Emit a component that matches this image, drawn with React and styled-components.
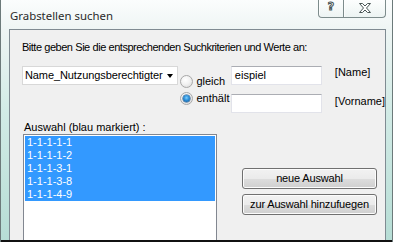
import React from "react";
import styled, { createGlobalStyle } from "styled-components";

const Global = createGlobalStyle`
  html, body { margin: 0; padding: 0; background: #fff; }
  body { width: 393px; height: 242px; overflow: hidden; }
`;

const Window = styled.div`
  width: 393px;
  height: 242px;
  box-sizing: border-box;
  display: flex;
  flex-direction: column;
  border-left: 1px solid #6c7a7a;
  border-right: 1px solid #6c7a7a;
  background: linear-gradient(to bottom, #fbfdfd 0px, #eef5f4 30px, #d2ebe6 110px, #b6ddd5 242px);
  overflow: hidden;
`;

const TitleBar = styled.div`
  height: 29px;
  flex: none;
  display: flex;
  align-items: flex-start;
  justify-content: space-between;
`;

const Title = styled.div`
  font-family: "Noto Sans", "Open Sans", sans-serif;
  font-size: 11.4px;
  color: #2a2a2a;
  padding: 8px 0 0 9px;
  line-height: 16px;
`;

const Caption = styled.div`
  display: flex;
  margin-right: 6px;
  margin-top: -1px;
`;

const CapBtn = styled.div`
  width: ${(p) => p.w}px;
  height: 19px;
  box-sizing: border-box;
  border: 1px solid #7d8c8c;
  border-top: none;
  border-left: ${(p) => (p.first ? "1px solid #7d8c8c" : "none")};
  border-radius: ${(p) => (p.first ? "0 0 0 4px" : "0 0 4px 0")};
  background: linear-gradient(to bottom, rgba(255,255,255,0.6), rgba(230,240,238,0.5));
  box-shadow: inset 1px 0 0 rgba(255,255,255,0.7);
  display: flex;
  align-items: center;
  justify-content: center;
`;

const HelpGlyph = styled.span`
  font-family: "DejaVu Sans", sans-serif;
  font-weight: bold;
  font-size: 11px;
  line-height: 11px;
  color: #fff;
  -webkit-text-stroke: 1px #4a5656;
  margin-top: -4px;
`;

const Client = styled.div`
  flex: 1;
  margin: 0 6px 0 8px;
  border: 1px solid #7f8b92;
  border-bottom: none;
  background: #f0f0f0;
  overflow: hidden;
  font-family: "Liberation Sans", Arial, sans-serif;
  font-size: 11px;
  color: #000;
`;

const BottomEdge = styled.div`
  height: 2px;
  flex: none;
  background: #111;
`;

const Prompt = styled.div`
  padding: 11px 0 0 12px;
  line-height: 13px;
  letter-spacing: -0.5px;
  word-spacing: 0.3px;
`;

const CriteriaRow = styled.div`
  display: flex;
  align-items: flex-start;
  padding: 12px 0 0 12px;
`;

const Combo = styled.div`
  width: 158px;
  height: 19px;
  box-sizing: border-box;
  border: 1px solid #d8d8d8;
  background: #fff;
  display: flex;
  align-items: center;
  justify-content: space-between;
  padding: 0 4px 0 2px;
  line-height: 13px;
  letter-spacing: -0.1px;
`;

const Arrow = styled.span`
  width: 0;
  height: 0;
  border-left: 3.5px solid transparent;
  border-right: 3.5px solid transparent;
  border-top: 4px solid #000;
  margin-top: 1px;
`;

const RadioGroup = styled.div`
  width: 51px;
  margin-left: 2px;
  padding-top: 9px;
  display: flex;
  flex-direction: column;
  gap: 4px;
`;

const RadioRow = styled.label`
  display: flex;
  align-items: center;
  gap: 3px;
  height: 13px;
  line-height: 13px;
`;

const RadioDot = styled.span`
  width: 13px;
  height: 13px;
  box-sizing: border-box;
  border-radius: 50%;
  border: 1px solid #a8a8a8;
  background: radial-gradient(circle at 40% 35%, #ffffff 0%, #f2f2f2 45%, #d6d6d6 100%);
  display: flex;
  align-items: center;
  justify-content: center;
  &::after {
    content: "";
    display: ${(p) => (p.checked ? "block" : "none")};
    width: 7px;
    height: 7px;
    border-radius: 50%;
    background: radial-gradient(circle at 50% 40%, #7fd0ff 0%, #2d8fd8 45%, #0a4d8c 100%);
    box-shadow: 0 0 0 0.5px #1a4f80;
  }
`;

const InputCol = styled.div`
  display: flex;
  flex-direction: column;
  gap: 9px;
`;

const TextBox = styled.div`
  width: 91px;
  height: 19px;
  box-sizing: border-box;
  border: 1px solid #e2e3ea;
  border-top-color: #abadb3;
  background: #fff;
  padding: 2px 0 0 3px;
  line-height: 13px;
`;

const HintCol = styled.div`
  display: flex;
  flex-direction: column;
  gap: 16px;
  margin-left: 13px;
  padding-top: 0px;
  color: #000;
  line-height: 13px;
`;

const Lower = styled.div`
  display: flex;
  align-items: flex-start;
  padding: 8px 0 0 13px;
`;

const ListCol = styled.div`
  display: flex;
  flex-direction: column;
`;

const ListLabel = styled.div`
  line-height: 13px;
  padding-left: 1px;
`;

const ListBox = styled.div`
  width: 194px;
  height: 130px;
  box-sizing: border-box;
  border: 1px solid #828790;
  background: #fff;
  padding: 1px;
`;

const Item = styled.div`
  height: 13px;
  line-height: 13px;
  padding-left: 2px;
  background: ${(p) => (p.selected ? "#3399ff" : "transparent")};
  color: ${(p) => (p.selected ? "#fff" : "#000")};
`;

const ButtonCol = styled.div`
  display: flex;
  flex-direction: column;
  gap: 5px;
  margin-left: 25px;
  padding-top: 47px;
`;

const Button = styled.button`
  width: 135px;
  height: 21px;
  box-sizing: border-box;
  border: 1px solid #707070;
  border-radius: 3px;
  background: linear-gradient(to bottom, #f2f2f2 0%, #ebebeb 50%, #dddddd 51%, #cfcfcf 100%);
  box-shadow: inset 0 0 0 1px #fcfcfc;
  font-family: "Liberation Sans", Arial, sans-serif;
  font-size: 11px;
  letter-spacing: -0.15px;
  color: #000;
  padding: 0;
  line-height: 13px;
`;

const items = ["1-1-1-1-1", "1-1-1-1-2", "1-1-1-3-1", "1-1-1-3-8", "1-1-1-4-9"];

export default function App() {
  return (
    <>
      <Global />
      <Window>
        <TitleBar>
          <Title>Grabstellen suchen</Title>
          <Caption>
            <CapBtn w={26} first>
              <HelpGlyph>?</HelpGlyph>
            </CapBtn>
            <CapBtn w={42}>
              <svg width="12" height="10" viewBox="0 0 12 10">
                <path
                  d="M0.5 0.5 H3.5 L6 3 L8.5 0.5 H11.5 L7.5 5 L11.5 9.5 H8.5 L6 7 L3.5 9.5 H0.5 L4.5 5 Z"
                  fill="#fff"
                  stroke="#4a5656"
                  strokeWidth="1"
                  strokeLinejoin="round"
                />
              </svg>
            </CapBtn>
          </Caption>
        </TitleBar>
        <Client>
          <Prompt>Bitte geben Sie die entsprechenden Suchkriterien und Werte an:</Prompt>
          <CriteriaRow>
            <Combo>
              <span>Name_Nutzungsberechtigter</span>
              <Arrow />
            </Combo>
            <RadioGroup>
              <RadioRow>
                <RadioDot />
                gleich
              </RadioRow>
              <RadioRow>
                <RadioDot checked />
                enthält
              </RadioRow>
            </RadioGroup>
            <InputCol>
              <TextBox>eispiel</TextBox>
              <TextBox />
            </InputCol>
            <HintCol>
              <span>[Name]</span>
              <span>[Vorname]</span>
            </HintCol>
          </CriteriaRow>
          <Lower>
            <ListCol>
              <ListLabel>Auswahl (blau markiert) :</ListLabel>
              <ListBox>
                {items.map((t) => (
                  <Item key={t} selected>
                    {t}
                  </Item>
                ))}
              </ListBox>
            </ListCol>
            <ButtonCol>
              <Button>neue Auswahl</Button>
              <Button>zur Auswahl hinzufuegen</Button>
            </ButtonCol>
          </Lower>
        </Client>
        <BottomEdge />
      </Window>
    </>
  );
}
